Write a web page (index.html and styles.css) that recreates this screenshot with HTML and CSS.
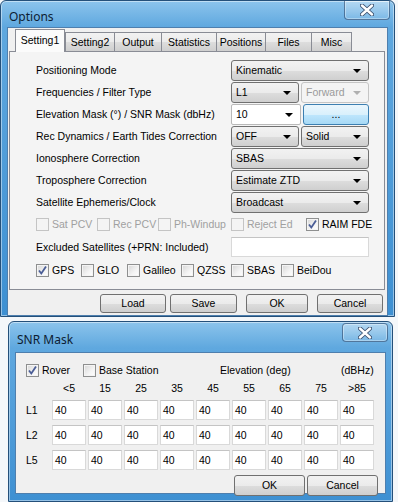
FILE: index.html
```html
<!DOCTYPE html>
<html lang="en">

<head>
    <meta charset="UTF-8">
    <title>Options</title>

    <link rel="stylesheet" href="styles.css">
</head>

<body>
    <div class="window options">
        <div class="titlebar">
            <span class="title">Options</span>
            <span class="close">
                <svg width="14" height="12" viewBox="0 0 14 12">
                    <path d="M2 1.5 L12 10.5 M12 1.5 L2 10.5" stroke="#3a4f6e" stroke-width="4.2" stroke-linecap="round" />
                    <path d="M2 1.5 L12 10.5 M12 1.5 L2 10.5" stroke="#fff" stroke-width="2.4" stroke-linecap="round" />
                </svg>
            </span>
        </div>
        <div class="client">
            <div class="tabs">
                <span class="tab active">Setting1</span>
                <span class="tab">Setting2</span>
                <span class="tab">Output</span>
                <span class="tab">Statistics</span>
                <span class="tab">Positions</span>
                <span class="tab">Files</span>
                <span class="tab">Misc</span>
            </div>
            <div class="panel">
                <div class="row">
                    <span class="label">Positioning Mode</span>
                    <div class="fields"><span class="combo">Kinematic</span></div>
                </div>
                <div class="row">
                    <span class="label">Frequencies / Filter Type</span>
                    <div class="fields">
                        <span class="combo">L1</span>
                        <span class="combo disabled">Forward</span>
                    </div>
                </div>
                <div class="row">
                    <span class="label">Elevation Mask (°) / SNR Mask (dbHz)</span>
                    <div class="fields">
                        <span class="combo edit">10</span>
                        <span class="btn hot">...</span>
                    </div>
                </div>
                <div class="row">
                    <span class="label">Rec Dynamics / Earth Tides Correction</span>
                    <div class="fields">
                        <span class="combo">OFF</span>
                        <span class="combo">Solid</span>
                    </div>
                </div>
                <div class="row">
                    <span class="label">Ionosphere Correction</span>
                    <div class="fields"><span class="combo">SBAS</span></div>
                </div>
                <div class="row">
                    <span class="label">Troposphere Correction</span>
                    <div class="fields"><span class="combo">Estimate ZTD</span></div>
                </div>
                <div class="row">
                    <span class="label">Satellite Ephemeris/Clock</span>
                    <div class="fields"><span class="combo">Broadcast</span></div>
                </div>
                <div class="row checks opts">
                    <label class="check disabled"><span class="box"></span>Sat PCV</label>
                    <label class="check disabled"><span class="box"></span>Rec PCV</label>
                    <label class="check disabled"><span class="box"></span>Ph-Windup</label>
                    <label class="check disabled"><span class="box"></span>Reject Ed</label>
                    <label class="check"><span class="box on"></span>RAIM FDE</label>
                </div>
                <div class="row tall">
                    <span class="label">Excluded Satellites (+PRN: Included)</span>
                    <div class="fields"><span class="text"></span></div>
                </div>
                <div class="row checks systems">
                    <label class="check"><span class="box on"></span>GPS</label>
                    <label class="check"><span class="box"></span>GLO</label>
                    <label class="check"><span class="box"></span>Galileo</label>
                    <label class="check"><span class="box"></span>QZSS</label>
                    <label class="check"><span class="box"></span>SBAS</label>
                    <label class="check"><span class="box"></span>BeiDou</label>
                </div>
            </div>
            <div class="buttons">
                <span class="btn load">Load</span>
                <span class="btn save">Save</span>
                <span class="btn ok">OK</span>
                <span class="btn cancel">Cancel</span>
            </div>
        </div>
    </div>

    <div class="window snr">
        <div class="titlebar">
            <span class="title">SNR Mask</span>
            <span class="close">
                <svg width="14" height="12" viewBox="0 0 14 12">
                    <path d="M2 1.5 L12 10.5 M12 1.5 L2 10.5" stroke="#3a4f6e" stroke-width="4.2" stroke-linecap="round" />
                    <path d="M2 1.5 L12 10.5 M12 1.5 L2 10.5" stroke="#fff" stroke-width="2.4" stroke-linecap="round" />
                </svg>
            </span>
        </div>
        <div class="client">
            <div class="snr-top">
                <label class="check rover"><span class="box on"></span>Rover</label>
                <label class="check base"><span class="box"></span>Base Station</label>
                <span class="elev">Elevation (deg)</span>
                <span>(dBHz)</span>
            </div>
            <div class="mask-grid">
                <span></span>
                <span class="head">&lt;5</span>
                <span class="head">15</span>
                <span class="head">25</span>
                <span class="head">35</span>
                <span class="head">45</span>
                <span class="head">55</span>
                <span class="head">65</span>
                <span class="head">75</span>
                <span class="head">&gt;85</span>

                <span class="freq">L1</span>
                <span class="text">40</span><span class="text">40</span><span class="text">40</span>
                <span class="text">40</span><span class="text">40</span><span class="text">40</span>
                <span class="text">40</span><span class="text">40</span><span class="text">40</span>

                <span class="freq">L2</span>
                <span class="text">40</span><span class="text">40</span><span class="text">40</span>
                <span class="text">40</span><span class="text">40</span><span class="text">40</span>
                <span class="text">40</span><span class="text">40</span><span class="text">40</span>

                <span class="freq">L5</span>
                <span class="text">40</span><span class="text">40</span><span class="text">40</span>
                <span class="text">40</span><span class="text">40</span><span class="text">40</span>
                <span class="text">40</span><span class="text">40</span><span class="text">40</span>
            </div>
            <div class="snr-buttons">
                <span class="btn">OK</span>
                <span class="btn">Cancel</span>
            </div>
        </div>
    </div>
</body>

</html>
```

FILE: styles.css
```css
body {
    margin: 0;
    width: 398px;
    height: 502px;
    overflow: hidden;
    background-color: #f4f7fa;
    font-family: "Liberation Sans", Arial, sans-serif;
    font-size: 10.5px;
    color: #000;
    white-space: nowrap;
}

/* aero window frame */
.window {
    box-sizing: border-box;
    border: 1px solid #24507a;
    border-radius: 6px 6px 0 0;
    background: linear-gradient(180deg, #8cc4ec 0px, #5fa8df 26px, #3e90d2 100%);
    box-shadow: inset 0 0 0 1px rgba(255, 255, 255, 0.45);
    padding: 0 6px 6px 6px;
}

.options {
    width: 395px;
    height: 317px;
}

.snr {
    width: 385px;
    height: 181px;
    margin: 4px 0 0 8px;
}

.titlebar {
    display: flex;
    justify-content: space-between;
    align-items: flex-start;
    height: 26px;
}

.snr .titlebar {
    height: 30px;
}

.title {
    font-family: "Noto Sans", sans-serif;
    font-size: 12px;
    color: #0d1d33;
    padding: 7px 0 0 2px;
}

.snr .title {
    padding: 9px 0 0 2px;
}

.close {
    display: flex;
    align-items: center;
    justify-content: center;
    width: 46px;
    height: 19px;
    box-sizing: border-box;
    margin-right: -2px;
    border: 1px solid rgba(20, 50, 90, 0.55);
    border-top: none;
    border-radius: 0 0 4px 4px;
    background: linear-gradient(180deg, rgba(255, 255, 255, 0.35), rgba(255, 255, 255, 0.1));
    box-shadow: inset 0 0 0 1px rgba(255, 255, 255, 0.35);
}

.snr .close {
    margin-top: 1px;
    border-top: 1px solid rgba(20, 50, 90, 0.55);
    border-radius: 4px;
}

.client {
    background-color: #f0f0f0;
    border: 1px solid #4e7fae;
}

.options .client {
    height: 287px;
    padding: 0 2px 0 1px;
}

.snr .client {
    height: 140px;
    padding: 0 0 0 10px;
}

/* tab control */
.tabs {
    display: flex;
    align-items: flex-end;
    height: 23px;
    padding-left: 6px;
}

.tab {
    box-sizing: border-box;
    height: 19px;
    line-height: 18px;
    text-align: center;
    border: 1px solid #898c95;
    border-bottom: none;
    border-left: none;
    background: linear-gradient(180deg, #f2f2f2 0%, #ebebeb 50%, #dddddd 51%, #cfcfcf 100%);
}

.tab:nth-child(2) { width: 50px; border-left: 1px solid #898c95; }
.tab:nth-child(3) { width: 47px; }
.tab:nth-child(4) { width: 55px; }
.tab:nth-child(5) { width: 49px; }
.tab:nth-child(6) { width: 46px; }
.tab:nth-child(7) { width: 40px; }

.tab.active {
    width: 50px;
    height: 23px;
    line-height: 21px;
    margin-bottom: -1px;
    border-left: 1px solid #898c95;
    background: #fbfbfb;
    position: relative;
}

.panel {
    box-sizing: border-box;
    height: 239px;
    border: 1px solid #898c95;
    background-color: #f4f4f4;
    padding: 7px 15px 0 26px;
}

.row {
    display: flex;
    align-items: center;
    height: 22px;
}

.row .fields {
    display: flex;
    gap: 2px;
    width: 138px;
    margin-left: auto;
}

.row.tall {
    height: 24px;
}

/* combo boxes */
.combo {
    position: relative;
    flex: 1;
    box-sizing: border-box;
    height: 21px;
    line-height: 19px;
    padding-left: 4px;
    border: 1px solid #707070;
    border-radius: 3px;
    background: linear-gradient(180deg, #f2f2f2 0%, #ebebeb 50%, #dddddd 51%, #cfcfcf 100%);
}

.combo::after {
    content: "";
    position: absolute;
    right: 7px;
    top: 8px;
    border-left: 4px solid transparent;
    border-right: 4px solid transparent;
    border-top: 4px solid #000;
}

.combo.edit {
    background: #fff;
    border-color: #b9b9b9;
    border-radius: 2px;
}

.combo.disabled {
    color: #9a9a9a;
    border-color: #c5c5c5;
    background: #f4f4f4;
}

.combo.disabled::after {
    border-top-color: #b0b0b0;
}

/* push buttons */
.btn {
    box-sizing: border-box;
    height: 21px;
    line-height: 19px;
    text-align: center;
    border: 1px solid #707070;
    border-radius: 3px;
    background: linear-gradient(180deg, #f2f2f2 0%, #ebebeb 50%, #dddddd 51%, #cfcfcf 100%);
}

.btn.hot {
    flex: 1;
    border-color: #3c7fb1;
    background: linear-gradient(180deg, #eaf6fd 0%, #d9f0fc 50%, #bee6fd 51%, #a7d9f5 100%);
}

.buttons {
    display: flex;
    padding: 4px 0 0 91px;
}

.buttons .btn {
    width: 66px;
    height: 19px;
    line-height: 17px;
}

.buttons .save {
    margin-left: 4px;
    width: 67px;
}

.buttons .ok {
    margin-left: 9px;
    width: 62px;
}

.buttons .cancel {
    margin-left: 9px;
}

/* check boxes */
.check {
    display: flex;
    align-items: center;
    gap: 3px;
}

.check.disabled {
    color: #a0a0a0;
}

.box {
    width: 13px;
    height: 13px;
    box-sizing: border-box;
    border: 1px solid #8e8f8f;
    background: linear-gradient(135deg, #d6d6d6 0%, #f4f4f4 60%, #ffffff 100%);
    box-shadow: inset 0 0 0 1px #f4f4f4;
    flex-shrink: 0;
}

.disabled .box {
    border-color: #c4c4c4;
    background: #f4f4f4;
}

.box.on {
    background:
        url("data:image/svg+xml,%3Csvg xmlns='http://www.w3.org/2000/svg' width='11' height='11'%3E%3Cpath d='M2 5.5 L4.3 8.5 L9 1.5' fill='none' stroke='%234a5d96' stroke-width='1.8'/%3E%3C/svg%3E") center no-repeat,
        linear-gradient(135deg, #d6d6d6 0%, #f4f4f4 60%, #ffffff 100%);
}

.checks {
    display: grid;
    align-items: center;
}

.checks.opts {
    grid-template-columns: 61px 61px 73px 75px auto;
}

.checks.systems {
    grid-template-columns: 45px 46px 54px 50px 50px auto;
}

/* edit boxes */
.text {
    box-sizing: border-box;
    height: 20px;
    line-height: 18px;
    padding-left: 2px;
    background: #fff;
    border: 1px solid #d9d9d9;
    border-top-color: #c4c4c4;
}

.fields .text {
    flex: 1;
}

/* snr mask dialog */
.snr-top {
    display: flex;
    align-items: center;
    height: 14px;
    margin-top: 10px;
}

.snr-top .rover {
    width: 57px;
}

.snr-top .base {
    width: 137px;
}

.snr-top .elev {
    width: 121px;
}

.mask-grid {
    display: grid;
    grid-template-columns: 24px repeat(9, 34px);
    grid-template-rows: 14px 20px 20px 20px;
    column-gap: 2px;
    row-gap: 5px;
    margin-top: 4px;
    align-items: center;
}

.mask-grid .head {
    text-align: center;
}

.snr-buttons {
    display: flex;
    justify-content: flex-end;
    gap: 2px;
    padding: 5px 7px 0 0;
}

.snr-buttons .btn {
    width: 71px;
    height: 21px;
}
```
